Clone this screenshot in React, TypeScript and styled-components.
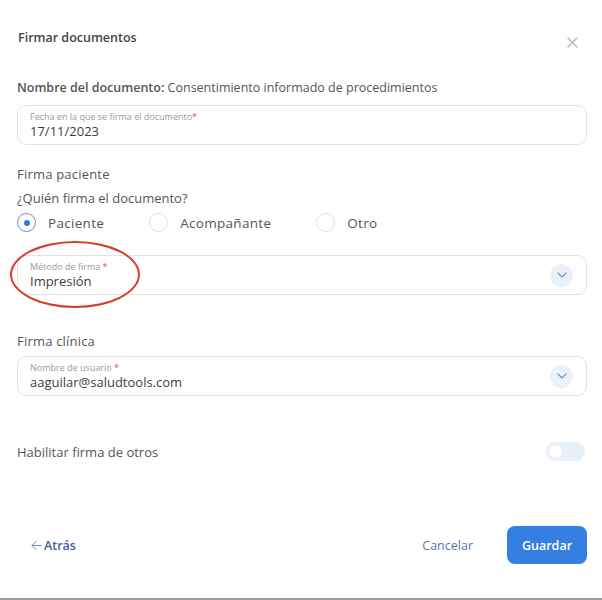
import styled, { createGlobalStyle } from 'styled-components'

const GlobalStyle = createGlobalStyle`
  html, body {
    margin: 0;
    padding: 0;
    background: #ffffff;
  }
  body {
    font-family: "Open Sans", "Liberation Sans", sans-serif;
    color: #555;
  }
`

interface RadioOption {
  label: string
  checked: boolean
}

const options: RadioOption[] = [
  { label: 'Paciente', checked: true },
  { label: 'Acompañante', checked: false },
  { label: 'Otro', checked: false },
]

function Chevron() {
  return (
    <ChevronCircle>
      <svg width="10" height="6" viewBox="0 0 10 6" fill="none">
        <path d="M1 1l4 4 4-4" stroke="#7d8fb0" strokeWidth="1.1" strokeLinecap="round" strokeLinejoin="round" />
      </svg>
    </ChevronCircle>
  )
}

export default function App() {
  return (
    <>
      <GlobalStyle />
      <Modal>
        <Header>
          <Title>Firmar documentos</Title>
          <Close>
            <svg width="11" height="11" viewBox="0 0 11 11">
              <path d="M1 1l9 9M10 1l-9 9" stroke="#b5b5b5" strokeWidth="1.4" strokeLinecap="round" />
            </svg>
          </Close>
        </Header>

        <DocName>
          <strong>Nombre del documento:</strong> Consentimiento informado de procedimientos
        </DocName>

        <Field>
          <FieldText>
            <FieldLabel>
              Fecha en la que se firma el documento<Star>*</Star>
            </FieldLabel>
            <FieldValue>17/11/2023</FieldValue>
          </FieldText>
        </Field>

        <SectionTitle $top={20}>Firma paciente</SectionTitle>
        <Question>¿Quién firma el documento?</Question>

        <RadioRow>
          {options.map((o) => (
            <RadioItem key={o.label}>
              <RadioCircle $checked={o.checked} />
              <RadioLabel>{o.label}</RadioLabel>
            </RadioItem>
          ))}
        </RadioRow>

        <Annotated>
          <Field $select>
            <FieldText>
              <FieldLabel>
                Método de firma <Star>*</Star>
              </FieldLabel>
              <FieldValue>Impresión</FieldValue>
            </FieldText>
            <Chevron />
          </Field>
          <Ellipse />
        </Annotated>

        <SectionTitle $top={37}>Firma clínica</SectionTitle>
        <UserField $select>
          <FieldText>
            <FieldLabel>
              Nombre de usuario <Star>*</Star>
            </FieldLabel>
            <FieldValue>aaguilar@saludtools.com</FieldValue>
          </FieldText>
          <Chevron />
        </UserField>

        <ToggleRow>
          <span>Habilitar firma de otros</span>
          <Toggle>
            <Knob />
          </Toggle>
        </ToggleRow>

        <Footer>
          <BackLink>
            <svg width="11" height="11" viewBox="0 0 11 11" fill="none">
              <path d="M10 5.5H1.2M5 1.5L1 5.5l4 4" stroke="#6f8cc0" strokeWidth="1" strokeLinecap="round" strokeLinejoin="round" />
            </svg>
            Atrás
          </BackLink>
          <Actions>
            <CancelButton>Cancelar</CancelButton>
            <SaveButton>Guardar</SaveButton>
          </Actions>
        </Footer>
      </Modal>
      <BottomEdge />
    </>
  )
}

const Modal = styled.div`
  height: 598px;
  box-sizing: border-box;
  padding: 29px 15px 0 17px;
  display: flex;
  flex-direction: column;
  background: #fff;
  border-radius: 0 0 10px 10px;
`

const Header = styled.div`
  display: flex;
  justify-content: space-between;
  align-items: flex-start;
  padding-left: 1px;
`

const Title = styled.h1`
  margin: 0;
  font-size: 12.5px;
  font-weight: 600;
  color: #444;
  line-height: 18px;
`

const Close = styled.div`
  margin-top: 8px;
  margin-right: 9px;
  display: flex;
`

const DocName = styled.div`
  margin-top: 31px;
  font-size: 12.5px;
  line-height: 18px;
  color: #555;

  strong {
    font-weight: 600;
  }
`

const Field = styled.div<{ $select?: boolean }>`
  margin-top: 8px;
  height: 40px;
  box-sizing: border-box;
  border: 1px solid #e4e4e4;
  border-radius: 9px;
  display: flex;
  align-items: center;
  justify-content: space-between;
  padding: 0 13px 0 12px;
`

const UserField = styled(Field)`
  margin-top: 6px;
`

const FieldText = styled.div`
  display: flex;
  flex-direction: column;
  gap: 1px;
`

const FieldLabel = styled.div`
  font-size: 9px;
  line-height: 11px;
  color: #9a9a9a;
`

const Star = styled.span`
  color: #e0524a;
`

const FieldValue = styled.div`
  font-size: 13px;
  line-height: 16px;
  color: #3d3d3d;
`

const SectionTitle = styled.div<{ $top: number }>`
  margin-top: ${(p) => p.$top}px;
  font-size: 13px;
  font-weight: 500;
  line-height: 18px;
  letter-spacing: 0.2px;
  color: #555;
`

const Question = styled.div`
  margin-top: 6px;
  font-size: 13px;
  line-height: 18px;
  color: #555;
`

const RadioRow = styled.div`
  margin-top: 6px;
  display: flex;
  align-items: center;
`

const RadioItem = styled.label`
  display: flex;
  align-items: center;
  gap: 12px;
  margin-right: 45px;
`

const RadioCircle = styled.span<{ $checked: boolean }>`
  width: 19px;
  height: 19px;
  box-sizing: border-box;
  border-radius: 50%;
  border: 1px solid ${(p) => (p.$checked ? '#6e8fc7' : '#e2e2e2')};
  position: relative;

  &::after {
    content: '';
    display: ${(p) => (p.$checked ? 'block' : 'none')};
    position: absolute;
    left: 5.5px;
    top: 5.5px;
    width: 6px;
    height: 6px;
    border-radius: 50%;
    background: #2f7ae5;
  }
`

const RadioLabel = styled.span`
  font-size: 13.5px;
  letter-spacing: 0.3px;
  color: #555;
`

const Annotated = styled.div`
  position: relative;
  margin-top: 23px;

  ${Field} {
    margin-top: 0;
  }
`

const Ellipse = styled.div`
  position: absolute;
  left: -7px;
  top: -14px;
  width: 130px;
  height: 67px;
  box-sizing: border-box;
  border: 2px solid #d83a2c;
  border-radius: 50%;
  pointer-events: none;
`

const ChevronCircle = styled.div`
  width: 23px;
  height: 23px;
  border-radius: 50%;
  background: #eaf1fb;
  display: flex;
  align-items: center;
  justify-content: center;
`

const ToggleRow = styled.div`
  margin-top: 46px;
  display: flex;
  justify-content: space-between;
  align-items: center;
  font-size: 13px;
  color: #555;
  padding-right: 2px;
`

const Toggle = styled.div`
  width: 39px;
  height: 19px;
  border-radius: 10px;
  background: #e8f0fb;
  display: flex;
  align-items: center;
  padding-left: 3px;
  box-sizing: border-box;
`

const Knob = styled.div`
  width: 13px;
  height: 13px;
  border-radius: 50%;
  background: #fff;
`

const Footer = styled.div`
  margin-top: 65px;
  display: flex;
  justify-content: space-between;
  align-items: center;
`

const BackLink = styled.div`
  display: flex;
  align-items: center;
  gap: 2px;
  margin-left: 14px;
  font-size: 12.5px;
  font-weight: 600;
  color: #3f5f99;
`

const Actions = styled.div`
  display: flex;
  align-items: center;
  gap: 34px;
`

const CancelButton = styled.button`
  border: none;
  background: none;
  padding: 0;
  font-family: inherit;
  font-size: 12.5px;
  font-weight: 500;
  color: #5a78ab;
`

const SaveButton = styled.button`
  width: 80px;
  height: 38px;
  border: none;
  border-radius: 8px;
  background: #357fe2;
  color: #fff;
  font-family: inherit;
  font-size: 12.5px;
  font-weight: 600;
`

const BottomEdge = styled.div`
  height: 2px;
  background: #9a9a9a;
`
